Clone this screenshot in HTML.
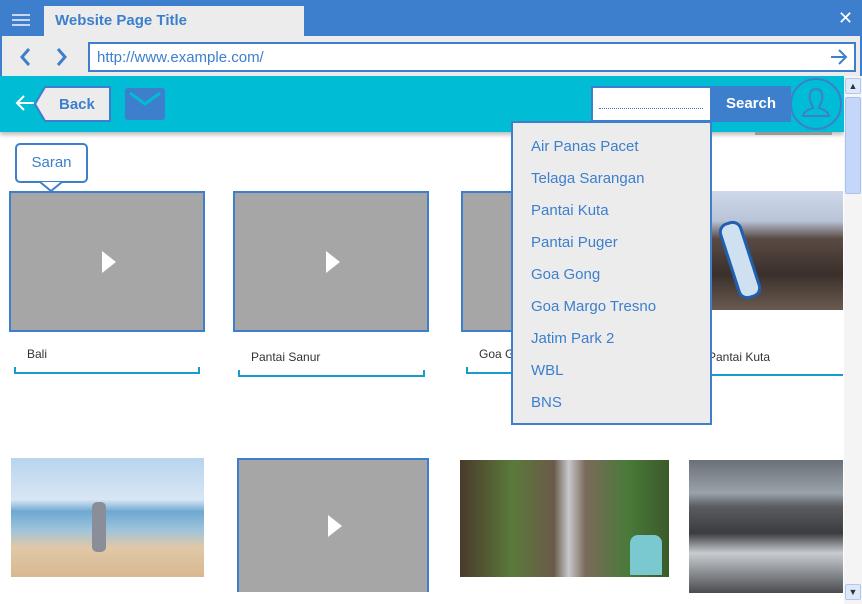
<!DOCTYPE html>
<html><head><style>
*{margin:0;padding:0;box-sizing:border-box}
body{width:862px;height:604px;overflow:hidden;background:#fff;font-family:"Liberation Sans",sans-serif;position:relative}
.a{position:absolute}
.card{position:absolute;background:#a6a6a6;border:2px solid #3d7fcc}
.play{position:absolute;width:0;height:0;border-left:14px solid #fff;border-top:11px solid transparent;border-bottom:11px solid transparent}
.lbl{position:absolute;font-size:12px;color:#333}
.br{position:absolute;border:2px solid #1a9bd0;border-top:none;height:7px}
.dd div{position:absolute;left:18px;font-size:15px;color:#3d7fcc}
</style></head><body>
<!-- top bar -->
<div class="a" style="left:0;top:0;width:862px;height:36px;background:#3d7fcc"></div>
<div class="a" style="left:12px;top:14px;width:18px;height:2px;background:#c8d8f0;box-shadow:0 5px 0 #c8d8f0,0 10px 0 #c8d8f0"></div>
<div class="a" style="left:44px;top:6px;width:260px;height:30px;background:#ececec"></div>
<div class="a" style="left:55px;top:12px;font-size:15px;font-weight:bold;color:#3d7fcc">Website Page Title</div>
<div class="a" style="left:838px;top:8px;font-size:18px;color:#fff">✕</div>
<!-- address -->
<div class="a" style="left:0;top:36px;width:862px;height:40px;background:#ececec;border-left:2px solid #3d7fcc;border-right:2px solid #3d7fcc"></div>
<svg class="a" style="left:14px;top:46px" width="60" height="22"><path d="M15 3 L8 11 L15 19" stroke="#3d7fcc" stroke-width="3" fill="none"/><path d="M44 3 L51 11 L44 19" stroke="#3d7fcc" stroke-width="3" fill="none"/></svg>
<div class="a" style="left:88px;top:42px;width:768px;height:30px;background:#fff;border:2px solid #3d7fcc"></div>
<div class="a" style="left:97px;top:49px;font-size:15px;color:#3d7fcc">http://www.example.com/</div>
<svg class="a" style="left:830px;top:48px" width="18" height="18"><path d="M1 9 H16 M9 2 L16 9 L9 16" stroke="#3d7fcc" stroke-width="2" fill="none"/></svg>
<!-- cyan bar -->
<div class="a" style="left:0;top:76px;width:844px;height:56px;background:#00bcd4;box-shadow:0 3px 4px rgba(0,0,0,.25)"></div>
<svg class="a" style="left:14px;top:93px" width="22" height="20"><path d="M20 10 H3 M10 3 L3 10 L10 17" stroke="#fff" stroke-width="2" fill="none"/></svg>
<svg class="a" style="left:33px;top:86px" width="80" height="36"><path d="M12 1 H77 V35 H12 L2 18 Z" fill="#ececec" stroke="#3d7fcc" stroke-width="2"/></svg>
<div class="a" style="left:59px;top:96px;font-size:15px;font-weight:bold;color:#3d7fcc">Back</div>
<div class="a" style="left:125px;top:88px;width:40px;height:32px;background:#3d7fcc;border-radius:3px"></div>
<svg class="a" style="left:125px;top:88px" width="40" height="32"><path d="M5 5 L20 16 L35 5" stroke="#00bcd4" stroke-width="3" fill="none"/></svg>
<div class="a" style="left:591px;top:86px;width:121px;height:36px;background:#fff;border:2px solid #3d7fcc"></div>
<div class="a" style="left:599px;top:108px;width:104px;border-top:1px dotted #3d7fcc"></div>
<div class="a" style="left:711px;top:86px;width:80px;height:36px;background:#3d7fcc;color:#fff;font-weight:bold;font-size:15px;text-align:center;line-height:36px">Search</div>
<div class="a" style="left:790px;top:78px;width:52px;height:52px;border-radius:50%;border:2px solid #3d7fcc;background:#00bcd4"></div>
<svg class="a" style="left:800px;top:86px" width="32" height="34"><path d="M16 3 C10 3 9 9 10 14 C11 18 13 20 13 22 C7 24 4 26 3 30 H29 C28 26 25 24 19 22 C19 20 21 18 22 14 C23 9 22 3 16 3 Z" fill="none" stroke="#3d7fcc" stroke-width="2"/></svg>
<div class="a" style="left:755px;top:132px;width:77px;height:3px;background:#999"></div>
<!-- scrollbar -->
<div class="a" style="left:844px;top:76px;width:18px;height:528px;background:#f4f4f4"></div>
<div class="a" style="left:845px;top:78px;width:16px;height:16px;background:#dde8fa;border:1px solid #b0c8f0;border-radius:2px;font-size:9px;text-align:center;color:#333;line-height:14px">▲</div>
<div class="a" style="left:845px;top:97px;width:16px;height:97px;background:#c4d7fb;border:1px solid #a8c2f0;border-radius:2px"></div>
<div class="a" style="left:845px;top:584px;width:16px;height:16px;background:#dde8fa;border:1px solid #b0c8f0;border-radius:2px;font-size:9px;text-align:center;color:#333;line-height:14px">▼</div>
<!-- row1 -->
<div class="card" style="left:9px;top:191px;width:196px;height:141px"><div class="play" style="left:91px;top:58px"></div></div>
<div class="lbl" style="left:27px;top:347px">Bali</div>
<div class="br" style="left:14px;top:367px;width:186px"></div>
<div class="card" style="left:233px;top:191px;width:196px;height:141px"><div class="play" style="left:91px;top:58px"></div></div>
<div class="lbl" style="left:251px;top:350px">Pantai Sanur</div>
<div class="br" style="left:238px;top:370px;width:187px"></div>
<div class="card" style="left:461px;top:191px;width:196px;height:141px"></div>
<div class="lbl" style="left:479px;top:347px">Goa Gong</div>
<div class="br" style="left:466px;top:367px;width:187px"></div>
<div class="a" style="left:711px;top:191px;width:132px;height:119px;background:linear-gradient(180deg,#cfd8ea 0,#b9c4d8 25%,#5a4a44 40%,#3a302c 70%,#6a5a50 100%)"></div>
<div class="a" style="left:728px;top:220px;width:24px;height:80px;background:#cfe0f0;border:3px solid #1f5fb0;border-radius:10px;transform:rotate(-18deg)"></div>
<div class="lbl" style="left:708px;top:350px">Pantai Kuta</div>
<div class="a" style="left:700px;top:374px;width:143px;height:2px;background:#1a9bd0"></div>
<!-- dropdown -->
<div class="a dd" style="left:511px;top:121px;width:201px;height:304px;background:#ececec;border:2px solid #3d7fcc">
<div style="top:15px">Air Panas Pacet</div>
<div style="top:47px">Telaga Sarangan</div>
<div style="top:79px">Pantai Kuta</div>
<div style="top:111px">Pantai Puger</div>
<div style="top:143px">Goa Gong</div>
<div style="top:175px">Goa Margo Tresno</div>
<div style="top:207px">Jatim Park 2</div>
<div style="top:239px">WBL</div>
<div style="top:271px">BNS</div>
</div>
<!-- saran -->
<div class="a" style="left:15px;top:143px;width:73px;height:40px;background:#fff;border:2px solid #3d7fcc;border-radius:5px;font-size:15px;color:#3d7fcc;text-align:center;line-height:36px">Saran</div>
<svg class="a" style="left:40px;top:181px" width="22" height="11"><path d="M0 1 L11 10 L22 1" fill="#fff" stroke="#3d7fcc" stroke-width="2"/></svg>
<!-- row2 -->
<div class="a" style="left:11px;top:458px;width:193px;height:119px;background:linear-gradient(180deg,#b8d4ee 0,#d8e6f4 35%,#6ea8d0 45%,#9cc4dc 60%,#e0c8a8 75%,#d8b890 100%)"></div>
<div class="a" style="left:92px;top:502px;width:14px;height:50px;background:#8a8e98;border-radius:5px"></div>
<div class="a" style="left:237px;top:458px;width:192px;height:134px;background:#a6a6a6;border:2px solid #3d7fcc;border-bottom:none"><div class="play" style="left:89px;top:55px"></div></div>
<div class="a" style="left:460px;top:460px;width:209px;height:117px;background:linear-gradient(90deg,#4a3a2c 0,#5a7a3a 25%,#6a5a4a 45%,#c8c8cc 52%,#7a6a5a 60%,#4a7a3a 80%,#3a5a2a 100%)"></div>
<div class="a" style="left:630px;top:535px;width:32px;height:40px;background:#7ac8d0;border-radius:8px 8px 0 0"></div>
<div class="a" style="left:689px;top:460px;width:154px;height:133px;background:linear-gradient(180deg,#6a7078 0,#9aa2aa 25%,#5a5c60 35%,#3a3c40 55%,#c8ccd0 70%,#4a4c50 100%)"></div>
</body></html>
